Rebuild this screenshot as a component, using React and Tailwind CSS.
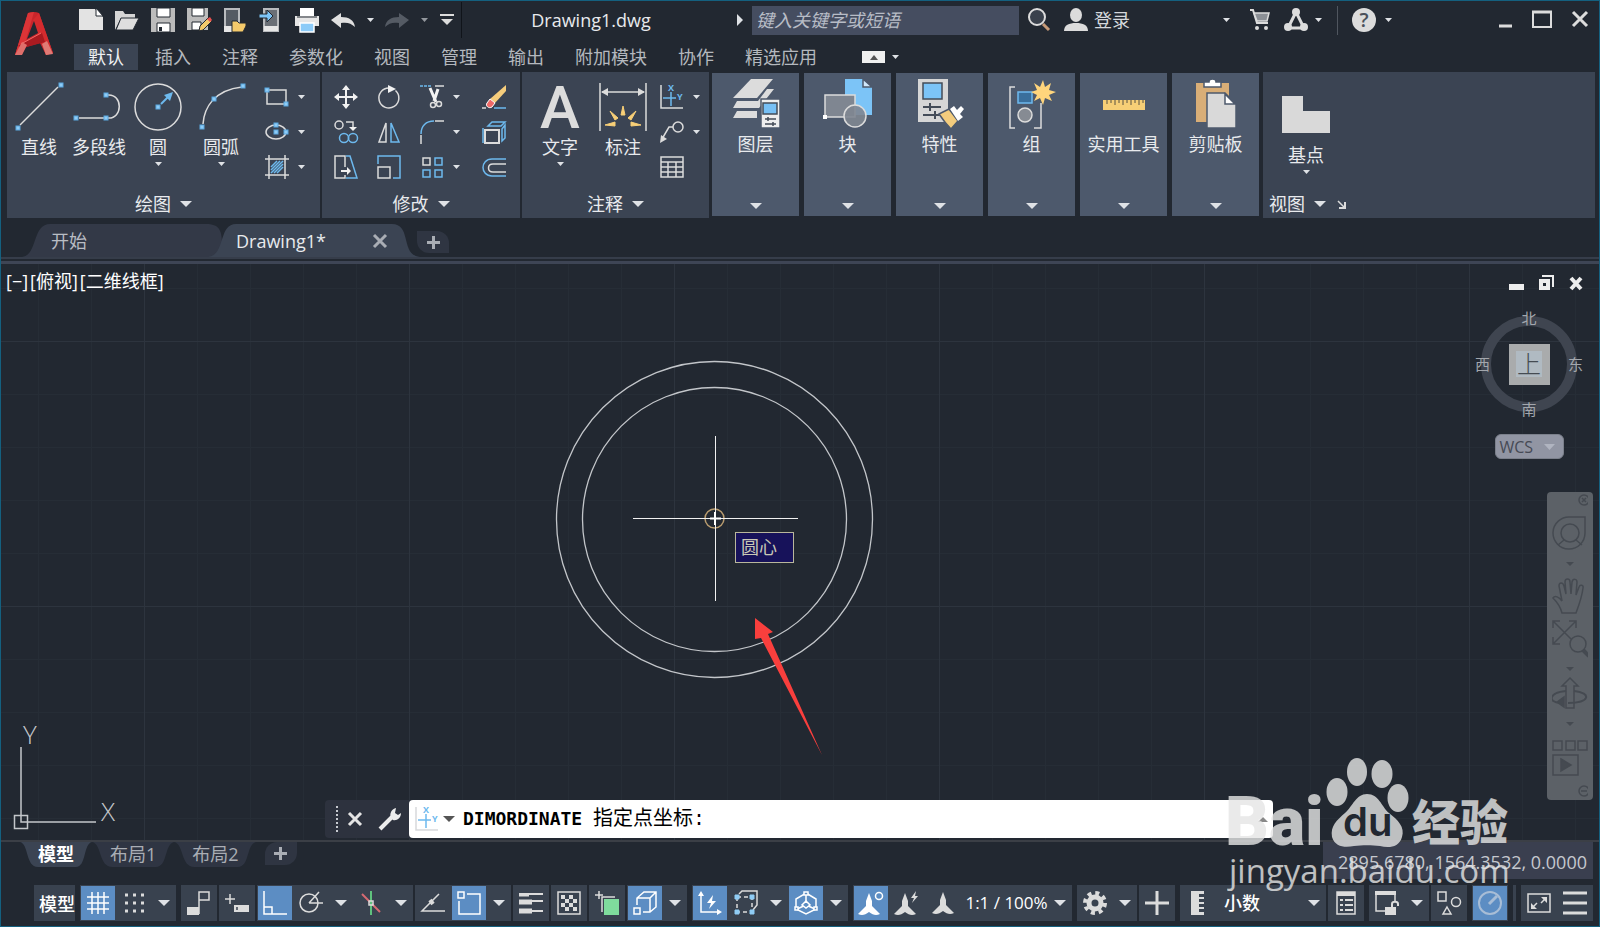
import React from 'react';
import clsx from 'clsx';

const BLUE = '#6db9ee';
const LIGHT = '#dcdcdc';

/* ---------- small shared pieces ---------- */

function Svg({ w = 24, h = 24, className, children }) {
  return (
    <svg width={w} height={h} viewBox={`0 0 ${w} ${h}`} fill="none" stroke={LIGHT} strokeWidth="1.5" aria-hidden="true" className={clsx('shrink-0 overflow-visible', className)}>
      {children}
    </svg>
  );
}

function Caret({ small, className }) {
  return small ? (
    <svg width="7" height="4" viewBox="0 0 7 4" fill="#dfe2e6" aria-hidden="true" className={clsx('shrink-0', className)}>
      <path d="M0 0h7L3.5 4z" />
    </svg>
  ) : (
    <svg width="12" height="6" viewBox="0 0 12 6" fill="#dfe2e6" aria-hidden="true" className={clsx('shrink-0', className)}>
      <path d="M0 0h12L6 6z" />
    </svg>
  );
}

function Node({ x, y }) {
  return <rect x={x - 2} y={y - 2} width="4" height="4" fill="#8fccf5" stroke="#5aa7e0" strokeWidth="1" />;
}

/* ---------- title bar ---------- */

function Logo() {
  return (
    <svg width="40" height="44" viewBox="0 0 40 44" aria-hidden="true">
      <path d="M14 1q6-2 11 0l14 40-7 2-6-12-14 4-4 7-7 1z" fill="#c9252b" />
      <path d="M14 1l6-1L8 42l-7 1z" fill="#dc3437" />
      <path d="M25 1l14 40-7 2L19 8z" fill="#d42b2e" />
      <path d="M20 9l4 12-11 6z" fill="#222831" />
      <path d="M4 34l24-13 3 9-22 6z" fill="#a81a20" />
      <path d="M1 43l7-13 5 3-5 10z" fill="#df6f6b" />
      <path d="M32 43l-4-11 5-3 6 13z" fill="#e07a75" />
      <path d="M7 32l20-11" stroke="#f06a66" strokeWidth="1" />
    </svg>
  );
}

const quickAccess = [
  { name: '新建', icon: <Svg><path d="M0 1h16l8 8v13H0z" fill="#e3e3e3" stroke="none" /><path d="M17 0v8h7z" fill="#fff" stroke="#222831" strokeWidth="1" /></Svg> },
  { name: '打开', icon: <Svg><path d="M0 22V3h8l2 3h10v4H6z" fill="#d5d5d5" stroke="none" /><path d="M6 10h18l-6 12H1z" fill="#dedede" stroke="#222831" strokeWidth="1" /></Svg> },
  { name: '保存', icon: <Svg><path d="M0 0h24v24H0z" fill="#bcbcbc" stroke="none" /><path d="M6 0h13v9H6zM6 15h13v9H6z" fill="#fff" stroke="#222831" strokeWidth="1" /><path d="M8 19h3v4H8z" fill="#222831" stroke="none" /></Svg> },
  { name: '另存为', icon: <Svg><path d="M0 0h21v22H0z" fill="#bcbcbc" stroke="none" /><path d="M5 0h12v8H5zM5 14h9v8H5z" fill="#fff" stroke="#222831" strokeWidth="1" /><path d="M12 23l1-5 8-8 4 3-9 9z" fill="#f5ca6b" stroke="#222831" strokeWidth="1" /><path d="M20 11l3-2 2 3-2 2z" fill="#e8504f" stroke="none" /></Svg> },
  { name: '从 Web 和 Mobile 打开', icon: <Svg><path d="M2 1h14v22H2z" fill="#555b63" stroke="#b9bbbe" strokeWidth="2" /><path d="M1 18h9v6H1z" fill="#e6e6e6" stroke="none" /><path d="M9 13h5l2 2h7v3l-3 6H9z" fill="#f5ca6b" stroke="#222831" strokeWidth="1" /></Svg> },
  { name: '保存到 Web 和 Mobile', icon: <Svg><path d="M5 1h14v22H5z" fill="#6a6f76" stroke="#b9bbbe" strokeWidth="2" /><path d="M5 18h14v5H5z" fill="#e6e6e6" stroke="none" /><path d="M0 6h8V2l6 6-6 6v-4H0z" fill="#7cc4f7" stroke="#222831" strokeWidth="1" /></Svg> },
  { name: '打印', icon: <Svg><path d="M5 0h14v8H5z" fill="#fff" stroke="none" /><path d="M0 8h24v10H0z" fill="#e6e6e6" stroke="none" /><path d="M2 9h20" stroke="#222831" strokeWidth="1" /><path d="M5 15h14v9H5z" fill="#8ccbf8" stroke="#fff" /></Svg> },
  { name: '放弃', icon: <Svg><path d="M0 12l10-7v4c8 0 13 3 14 10-4-4-8-5-14-4v5z" fill="#e0e0e0" stroke="none" /></Svg> },
];

function TitleBar() {
  return (
    <div className="flex h-[38px] items-center">
      <div className="flex items-center pl-[7px]">
        {quickAccess.map((q) => (
          <button key={q.name} aria-label={q.name} className="flex w-9 justify-center">{q.icon}</button>
        ))}
        <button aria-label="放弃列表" className="flex w-[18px] justify-center"><Caret small /></button>
        <button aria-label="重做" className="flex w-9 justify-center">
          <Svg><path d="M24 12l-10-7v4C6 9 1 12 0 19c4-4 8-5 14-4v5z" fill="#555b64" stroke="none" /></Svg>
        </button>
        <button aria-label="重做列表" className="flex w-[18px] justify-center"><Caret small className="opacity-60" /></button>
        <button aria-label="自定义快速访问工具栏" className="flex w-7 justify-center">
          <Svg w={14} h={12}><path d="M0 1h14" strokeWidth="2" /><path d="M1 5h12l-6 6z" fill={LIGHT} stroke="none" /></Svg>
        </button>
      </div>
      <h1 className="flex-1 border-l border-[#10141a] pr-2 text-center text-lg leading-9">Drawing1.dwg</h1>
      <div className="flex items-center">
        <button aria-label="展开搜索" className="flex w-6 justify-center">
          <svg width="6" height="12" viewBox="0 0 6 12" fill="#dfe2e6" aria-hidden="true"><path d="M0 0l6 6-6 6z" /></svg>
        </button>
        <input
          type="text"
          aria-label="搜索"
          placeholder="键入关键字或短语"
          className="h-[29px] w-[267px] bg-[#454d60] px-1 text-lg leading-7 italic outline-none placeholder:text-[#b7bcc6]"
        />
        <button aria-label="查找" className="flex w-10 justify-center">
          <Svg><circle cx="10" cy="9" r="8" strokeWidth="2" fill="#3a414c" /><path d="M16 16l6 6" stroke="#c79a78" strokeWidth="3" /></Svg>
        </button>
        <button className="flex items-center gap-[6px] text-lg leading-9 text-[#d5d8dc]">
          <Svg className="ml-[5px]"><ellipse cx="12" cy="7" rx="6" ry="7" fill={LIGHT} stroke="none" /><path d="M0 23c0-6 5-8 12-8s12 2 12 8z" fill={LIGHT} stroke="none" /></Svg>
          登录
          <Caret small className="ml-[87px]" />
        </button>
        <button aria-label="Autodesk App Store" className="ml-5 flex">
          <Svg w={20}><path d="M0 2h3l4 13h11" strokeWidth="2" /><path d="M4 5h15l-2 8H7z" fill="#8b8f95" stroke={LIGHT} /><circle cx="7" cy="20" r="2" fill={LIGHT} stroke="none" /><circle cx="16" cy="20" r="2" fill={LIGHT} stroke="none" /></Svg>
        </button>
        <button aria-label="保持连接" className="ml-[14px] flex items-center gap-[7px]">
          <Svg><path d="M12 4L4 20h16z" strokeWidth="3" /><circle cx="12" cy="4" r="4" fill={LIGHT} stroke="none" /><circle cx="4" cy="19" r="4" fill={LIGHT} stroke="none" /><circle cx="20" cy="19" r="4" fill={LIGHT} stroke="none" /></Svg>
          <Caret small />
        </button>
        <span className="mr-[14px] ml-[15px] h-[29px] w-px bg-[#50565f]" />
        <button aria-label="帮助" className="flex items-center gap-[9px]">
          <span className="grid size-6 place-items-center rounded-full bg-[#dcdcdc] text-xl leading-6 font-semibold text-[#4b515b]">?</span>
          <Caret small />
        </button>
        <div className="ml-[107px] flex items-center gap-5 pr-[11px]">
          <button aria-label="最小化"><Svg w={13} h={20}><path d="M0 16h13" strokeWidth="3" /></Svg></button>
          <button aria-label="最大化"><Svg w={20} h={20}><path d="M1 2h18v15H1z" strokeWidth="2" /><path d="M0 2h20" strokeWidth="3" /></Svg></button>
          <button aria-label="关闭"><Svg w={16} h={20}><path d="M1 2l14 14M15 2L1 16" strokeWidth="3" /></Svg></button>
        </div>
      </div>
    </div>
  );
}

const menuTabs = ['默认', '插入', '注释', '参数化', '视图', '管理', '输出', '附加模块', '协作', '精选应用'];

function MenuTabs() {
  return (
    <nav className="mt-[5px] flex h-[26px] items-center gap-[3px] pl-[8px]">
      {menuTabs.map((t, i) => (
        <button key={t} className={clsx('h-[26px] px-[14px] text-lg leading-[24px]', i === 0 ? 'bg-[#3b4453] text-[#eef0f2]' : 'text-[#b4b8be]')}>
          {t}
        </button>
      ))}
      <button aria-label="最小化功能区" className="ml-[28px] flex items-center gap-[7px]">
        <span className="grid h-3 w-[23px] place-items-center bg-[#f0f0f0]">
          <svg width="8" height="5" viewBox="0 0 8 5" fill="#555" aria-hidden="true"><path d="M4 0l4 5H0z" /></svg>
        </span>
        <Caret small />
      </button>
    </nav>
  );
}

/* ---------- ribbon ---------- */

function BigButton({ label, icon, caret, className }) {
  return (
    <button className={clsx('flex flex-col items-center', className)}>
      {icon}
      <span className="text-lg leading-[30px] whitespace-nowrap">{label}</span>
      {caret && <Caret small />}
    </button>
  );
}

function SmallButton({ label, icon, caret, className }) {
  return (
    <button aria-label={label} className={clsx('flex h-[35px] items-center', className)}>
      {icon}
      {caret && <Caret small className="ml-[9px]" />}
    </button>
  );
}

function Panel({ title, className, children }) {
  return (
    <section className={clsx('flex h-[146px] flex-col justify-between bg-[#3b4453]', className)}>
      <div className="flex">{children}</div>
      <button className="flex h-7 items-center justify-center gap-[9px] text-lg leading-7">
        {title}
        <Caret />
      </button>
    </section>
  );
}

const lineIcon = (
  <Svg w={50} h={50}><path d="M6 43L44 5" /><Node x={4} y={46} /><Node x={47} y={3} /></Svg>
);
const polylineIcon = (
  <Svg w={50} h={50}><path d="M5 36h25M34 36c15 1 15-24 0-23" /><Node x={2} y={36} /><Node x={32} y={36} /><Node x={32} y={13} /></Svg>
);
const circleIcon = (
  <Svg w={50} h={50}><circle cx="25" cy="25" r="23" /><path d="M28 22l8-8" stroke={BLUE} strokeWidth="2" /><path d="M40 10l-3 9-6-6z" fill={BLUE} stroke="none" /><Node x={25} y={25} /></Svg>
);
const arcIcon = (
  <Svg w={50} h={50}><path d="M7 42C8 26 18 8 46 5" /><Node x={6} y={45} /><Node x={18} y={17} /><Node x={47} y={4} /></Svg>
);

const drawSmall = [
  { name: '矩形', icon: <Svg><path d="M2 5h19v14H2z" /><Node x={2} y={5} /><Node x={21} y={19} /></Svg> },
  { name: '椭圆', icon: <Svg><ellipse cx="11" cy="12" rx="10" ry="7" /><Node x={11} y={5} /><Node x={11} y={12} /><Node x={21} y={12} /></Svg> },
  { name: '图案填充', icon: <Svg><path d="M6 18L18 6M6 12l6-6M12 18l6-6M6 15l9-9M9 18l9-9" stroke={BLUE} /><path d="M4 0v24M20 0v24M0 4h24M0 20h24" /></Svg> },
];

const modifyRows = [
  [
    { name: '移动', icon: <Svg><path d="M12 3v18M3 12h18" strokeWidth="2" stroke="#f2f2f2" /><path d="M12 0l4 5H8zM12 24l4-5H8zM0 12l5-4v8zM24 12l-5-4v8z" fill="#f2f2f2" stroke="none" /></Svg> },
    { name: '旋转', icon: <Svg><path d="M18.500 5.500A10 10 0 1 1 12 3" /><path d="M11 0l8 4-8 4z" fill="#f2f2f2" stroke="none" /></Svg> },
    { name: '修剪', icon: <Svg><path d="M0 1h11" stroke={BLUE} strokeDasharray="3 1" /><path d="M15 1h9" /><path d="M10 3l6 14M18 4l-4 12" strokeWidth="3" stroke="#f2f2f2" /><circle cx="13" cy="20" r="2.500" /><circle cx="19" cy="19" r="2.500" /></Svg> },
    { name: '删除', icon: <Svg><path d="M24 0v6L13 18l-5-4z" fill="#f6cd7c" stroke="none" /><path d="M8 14l5 4-3 4c-3 2-7-1-5-4z" fill="#ef6a68" stroke="#fff" strokeWidth="1" /><path d="M0 23h4" /><path d="M12 23h12" stroke={BLUE} /></Svg> },
  ],
  [
    { name: '复制', icon: <Svg><circle cx="5" cy="5" r="4" /><path d="M12 2h7v5" /><path d="M19 11l-4-4h8z" fill="#f2f2f2" stroke="none" /><circle cx="10" cy="18" r="4.500" stroke={BLUE} /><circle cx="19" cy="18" r="4.500" stroke={BLUE} /></Svg> },
    { name: '镜像', icon: <Svg><path d="M9 3v19H2z" /><path d="M14 3v19h8z" stroke={BLUE} /></Svg> },
    { name: '圆角', icon: <Svg><path d="M1 14C1 6 6 1 14 1" stroke={BLUE} /><path d="M15 1h9M1 15v9" /></Svg> },
    { name: '分解', icon: <Svg><path d="M3 10h14v13H3z" strokeWidth="2" /><path d="M6 6l4-4h13l-4 4zM20 9l3-4v13l-3 3zM1 8v15" stroke={BLUE} /></Svg> },
  ],
  [
    { name: '拉伸', icon: <Svg><path d="M11 12V1H1v22h10v-3" /><path d="M12 1h4l7 22H12" stroke={BLUE} /><path d="M7 16h7" strokeWidth="2" stroke="#f2f2f2" /><path d="M13 12l4 4-4 4z" fill="#f2f2f2" stroke="none" /></Svg> },
    { name: '缩放', icon: <Svg><path d="M1 9V1h22v22h-7" stroke={BLUE} /><path d="M1 12h12v11H1z" /></Svg> },
    { name: '阵列', icon: <Svg><path d="M3 3h7v7H3z" /><path d="M15 3h7v7h-7zM3 15h7v7H3zM15 15h7v7h-7z" stroke={BLUE} /></Svg> },
    { name: '偏移', icon: <Svg><path d="M24 4H10C-2 4-2 21 10 21h14" stroke={BLUE} /><path d="M24 9H11c-6 0-6 8 0 8h13" /></Svg> },
  ],
];

const cellWidths = ['w-[44px] pl-[10px]', 'w-[42px] pl-[9px]', 'w-[66px] pl-[10px]', 'w-[37px] pl-[6px]'];

function OrdinateGlyph({ stroke = LIGHT }) {
  return (
    <Svg>
      <path d="M1 0v23h22" stroke={stroke} />
      <path d="M11 7v14M3 13h13" stroke={BLUE} />
      <text x="8" y="6" fontSize="9" fontWeight="700" fill={BLUE} stroke="none">X</text>
      <text x="17" y="15" fontSize="9" fontWeight="700" fill={BLUE} stroke="none">Y</text>
    </Svg>
  );
}

const noteSmall = [
  { name: '坐标', icon: <OrdinateGlyph />, caret: true },
  { name: '引线', icon: <Svg><circle cx="18" cy="7" r="5" /><path d="M13 7H9L2 19" /><path d="M0 23l1-8 6 4z" fill={LIGHT} stroke="none" /></Svg>, caret: true },
  { name: '表格', icon: <Svg><path d="M1 2h22v20H1zM1 7h22M1 12h22M1 17h22M8 7v15M16 7v15" /></Svg> },
];

const collapsed = [
  {
    name: '图层',
    icon: (
      <Svg w={50} h={50}>
        <path d="M20 0h22L26 19H2z" fill={LIGHT} stroke="none" />
        <path d="M6 22h21l9-12h7L28 29H2zM6 32h20v7H2z" fill={LIGHT} stroke="none" />
        <path d="M30 20h19v29H30z" fill="#eee" stroke="#4d596c" />
        <path d="M32 24h14v11H32z" fill="#77c0f5" stroke="#444c58" />
        <path d="M34 40h11M34 45h11M37 38v4M42 43v4" stroke="#444c58" />
      </Svg>
    ),
  },
  {
    name: '块',
    icon: (
      <Svg w={50} h={50}>
        <path d="M22 0h18l9 8v28H22z" fill="#7cc4f7" stroke="none" />
        <path d="M40 0v8h9z" fill="#cfe8fb" stroke="#4d596c" />
        <path d="M2 16h30v22H2z" fill="#7f8691" />
        <circle cx="32" cy="37" r="11" fill="#7f8691" fillOpacity=".9" />
        <path d="M0 36h4v4H0z" fill="#fff" stroke="none" />
      </Svg>
    ),
  },
  {
    name: '特性',
    icon: (
      <Svg w={50} h={50}>
        <path d="M3 0h30v43H3z" fill="#d6d6d6" stroke="none" />
        <path d="M8 4h19v16H8z" fill="#7cc4f7" stroke="#444c58" />
        <path d="M8 28h18M8 36h18M15 24v8M20 32v8" stroke="#444c58" strokeWidth="2" />
        <path d="M24 35l10-5 9 12-7 8c-4-4-8-9-12-15z" fill="#f3cc7d" stroke="#4d596c" />
        <path d="M35 30l4-3 3 4 4-4 3 3-4 5 3 3-5 4z" fill="#fff" stroke="none" />
      </Svg>
    ),
  },
  {
    name: '组',
    icon: (
      <Svg w={50} h={50}>
        <path d="M8 8H3v41h5M27 49h7V24" />
        <path d="M11 13h14v11H11z" fill="#3a6f9c" stroke={BLUE} />
        <circle cx="18" cy="36" r="7" fill="#868b93" />
        <path d="M36 1l2 7 6-4-2 7 7 2-7 3 3 6-7-3-2 7-3-7-6 3 3-6-6-3 6-2-3-7 6 4z" fill="#ffd57c" stroke="none" />
      </Svg>
    ),
  },
  {
    name: '实用工具',
    icon: (
      <Svg w={50} h={50}>
        <path d="M4 21h42v10H4z" fill="#f7cf76" stroke="none" />
        <path d="M8 21v4M12 21v3M16 21v5M20 21v3M24 21v5M28 21v3M32 21v5M36 21v3M40 21v5M44 21v3" stroke="#5a5340" strokeWidth="1" />
      </Svg>
    ),
  },
  {
    name: '剪贴板',
    icon: (
      <Svg w={50} h={50}>
        <path d="M5 4h33v39H5z" fill="#d9ae77" stroke="none" />
        <path d="M13 8V3h5c0-4 7-4 7 0h5v5z" fill="#fff" stroke="#4d596c" />
        <path d="M16 14h18l11 11v24H16z" fill="#d9d9d9" stroke="#4d596c" />
        <path d="M34 15v10h10z" fill="#fff" stroke="#4d596c" />
      </Svg>
    ),
  },
];

function Ribbon() {
  return (
    <div className="flex pt-[2px] pr-[4px] pl-[6px]">
      <Panel title="绘图" className="w-[313px]">
        <div className="flex pt-[10px] pl-[6px]">
          <BigButton label="直线" icon={lineIcon} className="w-[52px]" />
          <BigButton label="多段线" icon={polylineIcon} className="w-[68px]" />
          <BigButton label="圆" icon={circleIcon} className="w-[50px]" caret />
          <BigButton label="圆弧" icon={arcIcon} className="w-[76px]" caret />
        </div>
        <div className="flex flex-col pt-[7px] pl-[6px]">
          {drawSmall.map((b) => <SmallButton key={b.name} label={b.name} icon={b.icon} caret />)}
        </div>
      </Panel>
      <Panel title="修改" className="ml-[2px] w-[198px]">
        <div className="flex flex-col pt-[7px] pl-[2px]">
          {modifyRows.map((row) => (
            <div key={row[0].name} className="flex">
              {row.map((b, i) => (
                <SmallButton key={b.name} label={b.name} icon={b.icon} caret={i === 2} className={cellWidths[i]} />
              ))}
            </div>
          ))}
        </div>
      </Panel>
      <Panel title="注释" className="ml-[2px] w-[187px]">
        <div className="flex pt-[10px] pl-[6px]">
          <BigButton
            label="文字"
            caret
            className="w-[64px]"
            icon={<Svg w={50} h={50}><text x="25" y="46" textAnchor="middle" fontSize="60" fontWeight="500" fontFamily="Roboto" fill={LIGHT} stroke="none">A</text></Svg>}
          />
          <BigButton
            label="标注"
            className="w-[62px]"
            icon={
              <Svg w={50} h={50}>
                <path d="M2 1v48M48 1v48M4 10h42" />
                <path d="M3 10l7-4v8zM47 10l-7-4v8z" fill={LIGHT} stroke="none" />
                <path d="M25 24l2 9h-4zM12 29l8 7-3 2zM38 29l-8 7 3 2zM7 43l10-3v4zM43 43l-10-3v4z" fill="#f8cf77" stroke="#f8cf77" strokeWidth="1" />
              </Svg>
            }
          />
        </div>
        <div className="flex flex-col pt-[7px] pl-[6px]">
          {noteSmall.map((b) => <SmallButton key={b.name} label={b.name} icon={b.icon} caret={b.caret} />)}
        </div>
      </Panel>
      <div className="mr-[4px] ml-[3px] flex gap-[5px] pt-px pb-[2px]">
        {collapsed.map((p) => (
          <button key={p.name} className="flex w-[87px] flex-col items-center bg-[#4d596c] pt-[6px] pb-[7px]">
            {p.icon}
            <span className="text-lg leading-[30px] whitespace-nowrap">{p.name}</span>
            <Caret className="mt-auto" />
          </button>
        ))}
      </div>
      <section className="flex h-[146px] flex-1 flex-col items-start justify-between bg-[#3b4453]">
        <BigButton
          label="基点"
          caret
          className="ml-[18px] pt-[18px]"
          icon={<Svg w={50} h={50}><path d="M1 6h21v15h27v22H1z" fill="#d9d9d9" stroke="none" /></Svg>}
        />
        <div className="flex h-7 items-center pl-[6px]">
          <button className="flex items-center gap-[9px] text-lg leading-7">视图<Caret /></button>
          <button aria-label="视图设置" className="ml-[11px]">
            <Svg w={9} h={9}><path d="M1 1l6 6" /><path d="M8 2v6H2" strokeWidth="2" /></Svg>
          </button>
        </div>
      </section>
    </div>
  );
}

/* ---------- file tabs ---------- */

function FileTabs() {
  return (
    <div className="border-b-[3px] border-[#3e4555] pb-[2px]">
      <div className="flex h-[41px] items-end border-b-2 border-[#363d4a] pl-[21px]">
        <button className="relative h-[33px] w-[200px] pl-[29px] text-left text-lg leading-8 text-[#b9bdc4]">
          <svg className="absolute inset-0 h-full w-full" viewBox="0 0 200 33" preserveAspectRatio="none" aria-hidden="true">
            <path d="M0 33C16 31 10 0 28 0h156c18 0 16 12 16 33z" fill="#333947" />
          </svg>
          <span className="relative">开始</span>
        </button>
        <div className="relative -ml-[14px] flex h-[33px] w-[212px] items-center pl-[28px]">
          <svg className="absolute inset-0 h-full w-full" viewBox="0 0 212 33" preserveAspectRatio="none" aria-hidden="true">
            <path d="M0 33C18 31 10 0 28 0h156c20 0 8 31 28 33z" fill="#3b4453" />
          </svg>
          <button className="relative text-lg leading-8">Drawing1*</button>
          <button aria-label="关闭 Drawing1" className="relative mr-[33px] ml-auto">
            <Svg w={14} h={14}><path d="M1 1l12 12M13 1L1 13" stroke="#a9adb4" strokeWidth="3" /></Svg>
          </button>
        </div>
        <button aria-label="新图形" className="mb-1 -ml-[3px] grid h-[22px] w-[32px] place-items-center rounded-tr-xl rounded-bl-xl bg-[#2f3542]">
          <Svg w={13} h={13}><path d="M6.500 0v13M0 6.500h13" stroke="#a9adb4" strokeWidth="3" /></Svg>
        </button>
      </div>
    </div>
  );
}

/* ---------- drawing area ---------- */

function Drawing() {
  return (
    <svg className="absolute inset-0 h-full w-full" aria-hidden="true">
      <defs>
        <pattern id="minor" width="53" height="53" x="37" y="24" patternUnits="userSpaceOnUse">
          <path d="M.5 0v53M0 .5h53" stroke="#262d36" />
        </pattern>
        <pattern id="major" width="265" height="265" x="143" y="77" patternUnits="userSpaceOnUse">
          <path d="M.5 0v265M0 .5h265" stroke="#2d343e" />
        </pattern>
      </defs>
      <rect width="100%" height="100%" fill="url(#minor)" />
      <rect width="100%" height="100%" fill="url(#major)" />
      <g fill="none" stroke="#c3c6ca" strokeWidth="1.300">
        <circle cx="713.500" cy="255.500" r="158" />
        <circle cx="713.500" cy="255.500" r="132" />
      </g>
      <circle cx="713.500" cy="254.500" r="9.500" fill="none" stroke="#b99c6f" strokeWidth="1.500" />
      <path d="M714.500 172v165M632 254.500h165" stroke="#f1f1f1" />
      <path d="M714 248v13M709 254.500h11" stroke="#fff" strokeWidth="2" />
      <path d="M754 354l18 14-5 2 54 121-61-117-6 1z" fill="#f93f3d" />
    </svg>
  );
}

function Ucs() {
  return (
    <svg className="absolute bottom-0 left-[12px]" width="110" height="130" viewBox="0 -14 110 130" fill="none" stroke="#c3c6ca" strokeWidth="1.500" aria-hidden="true">
      <path d="M8 23v75h75" />
      <path d="M1.500 91.500h13v13h-13z" />
      <text x="10" y="20" fontSize="26" fontFamily="Open Sans" fontWeight="300" fill="#c3c6ca" stroke="none">Y</text>
      <text x="88" y="97" fontSize="26" fontFamily="Open Sans" fontWeight="300" fill="#c3c6ca" stroke="none">X</text>
    </svg>
  );
}

function ViewCube() {
  return (
    <div className="absolute top-[40px] right-[16px] flex w-[108px] flex-col items-center">
      <div className="relative grid size-[108px] place-items-center text-[15px] leading-5 text-[#a3a7ad]">
        <span className="absolute inset-x-[6px] top-[12px] size-[96px] rounded-full border-[10px] border-[#3f4550]" />
        <button className="absolute top-[4px]">北</button>
        <button className="absolute bottom-[-7px]">南</button>
        <button className="absolute top-[50px] left-0">西</button>
        <button className="absolute top-[50px] right-0">东</button>
        <button className="relative mt-[12px] grid size-[41px] place-items-center bg-[#a9abac]">
          <span className="grid size-[26px] place-items-center bg-[#b0bac2] text-2xl leading-6 font-light text-[#454b52]">上</span>
        </button>
      </div>
      <button className="mt-[22px] flex h-[25px] w-[69px] items-center justify-between rounded-md border border-[#7b808b] bg-[#9195a3] px-1 text-base leading-6 text-[#464a55]">
        WCS
        <svg width="11" height="6" viewBox="0 0 11 6" fill="#b0b4c0" className="mr-1" aria-hidden="true"><path d="M0 0h11L5.500 6z" /></svg>
      </button>
    </div>
  );
}

function NavIcon({ name, h, children }) {
  return (
    <button aria-label={name}>
      <svg width="36" height={h} viewBox={`0 0 36 ${h}`} fill="none" stroke="#454a51" strokeWidth="1.500" aria-hidden="true">{children}</svg>
    </button>
  );
}

const navCaret = <path d="M14 2h8l-4 4z" fill="#454a51" stroke="none" />;

function NavBar() {
  return (
    <div className="absolute top-[228px] right-[6px] flex w-[46px] flex-col items-center rounded-sm bg-[#5c6167]">
      <NavIcon name="关闭导航栏" h={20}><circle cx="32" cy="8" r="5" /><path d="M30 6l4 4M34 6l-4 4" /></NavIcon>
      <NavIcon name="控制盘" h={60}>
        <path d="M18 5h15v16a16 16 0 1 1-15-16z" /><circle cx="18" cy="21" r="9" /><path d="M12 28l-6 5M24 28l6 5" />
        <g transform="translate(0 48)">{navCaret}</g>
      </NavIcon>
      <NavIcon name="平移" h={48}>
        <path d="M10 41C8 33 4 29 1 26c2-3 6-1 9 3L7 14c0-4 4-4 5 0l2 8-1-12c0-4 5-4 5 0l1 12 1-12c1-4 5-3 5 0l-1 13 3-8c1-3 5-2 4 1-1 9-4 17-7 25z" />
      </NavIcon>
      <NavIcon name="缩放" h={55}>
        <path d="M2 2l21 21M23 2L2 23M1 8V1h7M17 1h7v7M1 17v7h7" /><circle cx="26" cy="24" r="8" fill="#5c6167" /><path d="M31 30l6 6" strokeWidth="4" />
        <g transform="translate(0 45)">{navCaret}</g>
      </NavIcon>
      <NavIcon name="动态观察" h={60}>
        <path d="M14 33V11h-4l8-8 8 8h-4v22z" /><path d="M14 16C-4 18-4 27 8 28M22 16c18 2 16 12-6 12" strokeWidth="2" /><path d="M5 27l7-5v10z" fill="#454a51" />
        <g transform="translate(0 45)">{navCaret}</g>
      </NavIcon>
      <NavIcon name="ShowMotion" h={50}>
        <path d="M1 6h9v9H1zM14 6h9v9h-9zM26 6h9v9h-9zM1 20h25v20H1z" /><path d="M9 24l10 6-10 6z" fill="#454a51" />
      </NavIcon>
      <NavIcon name="自定义导航栏" h={15}><circle cx="32" cy="6" r="5" /><path d="M29 6h6" /></NavIcon>
    </div>
  );
}

function CommandLine() {
  return (
    <div className="absolute bottom-[2px] left-[324px] flex h-[38px] w-[948px] items-stretch rounded-sm bg-[#2d323e]">
      <div className="flex w-[84px] items-center pl-[11px]">
        <span className="h-[26px] border-l-2 border-dotted border-[#c7cad0]" />
        <button aria-label="关闭命令行" className="ml-[10px]">
          <Svg w={14} h={14}><path d="M1 1l12 12M13 1L1 13" stroke="#e4e4e4" strokeWidth="3" /></Svg>
        </button>
        <button aria-label="自定义" className="ml-[16px]">
          <Svg><path d="M2 22L14 10" stroke="#ececec" strokeWidth="4" /><path d="M13 11c-2-5 1-9 5-10l-1 5 3 2 3-2c0 5-4 8-8 7z" fill="#ececec" stroke="none" /></Svg>
        </button>
      </div>
      <div className="flex flex-1 items-center rounded-sm bg-white pl-[6px] text-black">
        <button aria-label="最近使用的命令" className="flex items-center gap-1">
          <OrdinateGlyph stroke="#d7d9dc" />
          <svg width="12" height="6" viewBox="0 0 12 6" fill="#555" aria-hidden="true"><path d="M0 0h12L6 6z" /></svg>
        </button>
        <label htmlFor="command" className="ml-[8px] font-['DejaVu_Sans_Mono','Noto_Sans_CJK_SC',monospace] text-lg leading-9 whitespace-nowrap">
          <b>DIMORDINATE</b> <span className="font-['Liberation_Mono','Noto_Sans_CJK_SC',monospace] text-xl">指定点坐标:</span>
        </label>
        <input id="command" type="text" className="h-9 min-w-0 flex-1 bg-transparent pl-2 text-lg outline-none" />
        <button aria-label="命令历史" className="pr-[5px]">
          <svg width="10" height="5" viewBox="0 0 10 5" fill="#888" aria-hidden="true"><path d="M5 0l5 5H0z" /></svg>
        </button>
      </div>
    </div>
  );
}

function Canvas() {
  return (
    <main className="relative flex-1">
      <Drawing />
      <div className="relative flex items-start justify-between pt-[3px] pr-[15px] pl-[5px]">
        <div className="flex gap-[2px] text-lg leading-7 text-white">
          <button>[−]</button>
          <button>[俯视]</button>
          <button>[二维线框]</button>
        </div>
        <div className="flex items-center gap-[15px] pt-[8px]">
          <button aria-label="最小化视口"><Svg w={15} h={16}><path d="M0 9h15v6H0z" fill="#ededed" stroke="none" /></Svg></button>
          <button aria-label="还原视口"><Svg w={15} h={16}><path d="M2 6h7v7H2z" stroke="#ededed" strokeWidth="4" /><path d="M3 1h11v11" stroke="#ededed" strokeWidth="2" /></Svg></button>
          <button aria-label="关闭视口"><Svg w={15} h={16}><path d="M2 3l10 11M12 3L2 14" stroke="#ededed" strokeWidth="4" /></Svg></button>
        </div>
      </div>
      <span className="absolute top-[268px] left-[734px] h-[31px] w-[59px] border border-[#b9b79c] bg-[#17125a] pl-[5px] text-lg leading-[28px] text-[#c9c8b6]">
        圆心
      </span>
      <Ucs />
      <ViewCube />
      <NavBar />
      <CommandLine />
    </main>
  );
}

/* ---------- layout tabs and status bar ---------- */

const layoutTabs = [
  { name: '模型', active: true },
  { name: '布局1' },
  { name: '布局2' },
];

function LayoutTabs() {
  return (
    <div className="flex h-[45px] items-start border-t-2 border-[#3b3f46] pr-[6px] pl-[19px]">
      {layoutTabs.map((t) => (
        <button key={t.name} className={clsx('relative h-[25px] px-[18px] text-lg leading-[23px]', t.active ? 'font-bold text-white' : 'text-[#a9adb4]')}>
          <svg className="absolute inset-0 h-full w-full" viewBox="0 0 80 25" preserveAspectRatio="none" aria-hidden="true">
            <path d="M0 0c10 2 6 25 20 25h42C74 25 70 2 80 0z" fill={t.active ? '#3b4453' : '#2f3543'} />
          </svg>
          <span className="relative">{t.name}</span>
        </button>
      ))}
      <button aria-label="新建布局" className="ml-[8px] grid h-[23px] w-[32px] place-items-center rounded-tl-xl rounded-br-xl bg-[#2f3542]">
        <Svg w={13} h={13}><path d="M6.500 0v13M0 6.500h13" stroke="#a9adb4" strokeWidth="3" /></Svg>
      </button>
      <output className="ml-auto h-[37px] w-[270px] bg-[#3a3f4f] pr-[6px] text-right text-lg leading-[40px] text-[#c5c8ce]">2895.6780, 1564.3532, 0.0000</output>
    </div>
  );
}

function Group({ children }) {
  return <div className="flex h-9 shrink-0 items-stretch bg-[#39424f]">{children}</div>;
}

function Cell({ label, on, children }) {
  return (
    <button aria-label={label} aria-pressed={!!on} className={clsx('grid w-9 place-items-center border border-[#39424f]', on && 'bg-[#5c8dc3]')}>
      <Svg>{children}</Svg>
    </button>
  );
}

function Drop({ label }) {
  return <button aria-label={label} className="grid w-6 place-items-center"><Caret /></button>;
}

const scalePerson = 'M12 0l3 8v5l8 8c-4 2-7 1-11-2-4 3-7 4-11 2l8-8V8z';

function StatusBar() {
  return (
    <footer className="flex h-[41px] items-start justify-end gap-[5px] pr-[6px] text-white">
      <Group><button className="w-[41px] pt-px text-right text-lg font-medium whitespace-nowrap">模型</button></Group>
      <Group>
        <Cell label="显示图形栅格" on><path d="M6 1v22M12 1v22M18 1v22M1 6h22M1 12h22M1 18h22" stroke="#fff" /></Cell>
        <Cell label="捕捉模式"><path d="M3 4h20M3 12h20M3 20h20" strokeWidth="3" strokeDasharray="3 5" /></Cell>
        <Drop label="捕捉设置" />
      </Group>
      <div className="flex gap-[2px]">
        <Group><Cell label="推断约束"><path d="M0 16h12v8H0z" fill={LIGHT} stroke="none" /><path d="M12 23V1h10v8H12" /></Cell></Group>
        <Group><Cell label="动态输入"><path d="M5 3v10M0 8h10" /><path d="M9 14h15v7H9z" fill={LIGHT} stroke="none" /><path d="M12 16v3" stroke="#39424f" /></Cell></Group>
        <Group>
          <Cell label="正交模式" on><path d="M1 0v23h23M1 16h8v7" stroke="#fff" /></Cell>
          <Cell label="极轴追踪"><circle cx="10" cy="12" r="9" /><path d="M10 12h14M10 12L20 1" /></Cell>
          <Drop label="极轴设置" />
          <Cell label="等轴测草图"><path d="M3 3l18 18" stroke="#d66a72" strokeWidth="2" /><path d="M12 0v24" stroke="#5fc27d" strokeWidth="2" /><path d="M10 10h4v4h-4z" /></Cell>
          <Drop label="等轴测设置" />
        </Group>
        <Group>
          <Cell label="对象捕捉追踪"><path d="M18 3L1 20h23" /><path d="M9 9l3 4" stroke={LIGHT} strokeWidth="4" /></Cell>
          <Cell label="对象捕捉" on><path d="M10 3h13v20H2V10" stroke="#fff" /><path d="M1 1h6v6H1z" stroke="#fff" /></Cell>
          <Drop label="对象捕捉设置" />
        </Group>
        <Group><Cell label="线宽"><path d="M0 3h24" strokeWidth="2" /><path d="M0 4h10" strokeWidth="3" /><path d="M0 10h24M0 20h24" strokeWidth="2" /><path d="M0 11h13M0 20h13" strokeWidth="5" /></Cell></Group>
        <Group>
          <Cell label="透明度">
            <path d="M1 1h22v22H1z" />
            <path d="M4 6h16M4 14h16" strokeWidth="4" strokeDasharray="4 4" />
            <path d="M8 10h12M8 18h12" strokeWidth="4" strokeDasharray="4 4" />
          </Cell>
        </Group>
        <Group><Cell label="选择循环"><path d="M4 0v8M0 4h8" /><path d="M20 6H7v15" /><path d="M9 8h15v16H9z" fill="#7fdc9d" stroke="none" /></Cell></Group>
        <Group>
          <Cell label="三维对象捕捉" on><path d="M4 14V7l7-6h12v15l-6 5h-7M4 7h13v14M17 7l6-6" stroke="#fff" /><path d="M1 17h6v6H1z" stroke="#fff" /></Cell>
          <Drop label="三维对象捕捉设置" />
        </Group>
      </div>
      <Group>
        <Cell label="动态 UCS" on><path d="M3 4v17h17" stroke="#fff" /><path d="M3 0l3 5H0zM24 21l-5-3v6zM15 4l-6 8h4l-2 6 7-8h-4z" fill="#fff" stroke="none" /></Cell>
        <Cell label="选择过滤"><path d="M3 6h15v15H3z" strokeDasharray="4 3" /><path d="M5 3l3-3h15v14l-4 5" /><path d="M1 4h4v4H1zM16 4h4v4h-4zM1 19h4v4H1zM16 19h4v4h-4z" fill="#8fccf5" stroke="#8fccf5" strokeWidth="1" /></Cell>
        <Drop label="过滤设置" />
        <Cell label="小控件" on><path d="M12 2l10 6v10l-10 5-10-5V8zM12 2v12M12 14L3 18M12 14l9 4" stroke="#fff" /><path d="M10 1h4v3h-4zM1 16h3v3H1zM20 16h3v3h-3zM12 10l4 4-4 3-4-3z" fill="#5c8dc3" stroke="#fff" /></Cell>
        <Drop label="小控件设置" />
      </Group>
      <Group>
        <Cell label="显示注释对象" on><g transform="translate(-2 2)"><path d={scalePerson} fill="#fff" stroke="none" /></g><circle cx="20" cy="5" r="3.500" stroke="#fff" /></Cell>
        <Cell label="自动缩放"><g transform="translate(-2 2)"><path d={scalePerson} fill={LIGHT} stroke="none" /></g><path d="M21 0l-5 7h3l-2 5 6-7h-3z" fill={LIGHT} stroke="none" /></Cell>
        <Cell label="注释比例"><g transform="translate(0 1)"><path d={scalePerson} fill={LIGHT} stroke="none" /></g></Cell>
        <button className="w-[87px] pl-1 text-center text-[17px] whitespace-nowrap">1:1 / 100%</button>
        <Drop label="比例列表" />
      </Group>
      <div className="flex gap-[2px]">
        <Group>
          <Cell label="切换工作空间">
            <circle cx="12" cy="12" r="6" strokeWidth="5" />
            <circle cx="12" cy="12" r="10" strokeWidth="4" strokeDasharray="4 3.850" />
          </Cell>
          <Drop label="工作空间列表" />
        </Group>
        <Group><Cell label="注释监视器"><path d="M12 0v24M0 12h24" strokeWidth="3" /></Cell></Group>
      </div>
      <div className="flex gap-[2px]">
        <Group>
          <label htmlFor="units" aria-label="图形单位" className="grid w-9 place-items-center">
            <Svg><path d="M5 0h13v3h-5v3h5v2h-5v3h5v2h-5v3h5v2h-5v3h5v3H5z" fill={LIGHT} stroke="none" /></Svg>
          </label>
          <div className="relative flex w-[110px]">
            <select id="units" defaultValue="小数" className="w-full appearance-none bg-transparent pl-[8px] text-lg font-medium outline-none">
              <option>小数</option>
              <option>工程</option>
              <option>建筑</option>
            </select>
            <Caret className="pointer-events-none absolute top-[15px] right-[6px]" />
          </div>
        </Group>
        <Group><Cell label="快捷特性"><path d="M3 1h18v22H3z" /><path d="M3 3h18" strokeWidth="4" /><path d="M6 9h3M6 14h3M6 19h3M11 9h8M11 14h8M11 19h8" strokeWidth="2" /></Cell></Group>
      </div>
      <div className="flex gap-[2px]">
        <Group>
          <Cell label="锁定用户界面"><path d="M10 20H1V2h19v8" /><path d="M0 2h21" strokeWidth="4" /><path d="M10 16h11v8H10z" fill={LIGHT} stroke="none" /><path d="M17 16v-3c0-3 6-3 6 0v2" strokeWidth="2" /></Cell>
          <Drop label="锁定列表" />
        </Group>
        <Group><Cell label="隔离对象"><path d="M1 1h8v9H1z" /><circle cx="19" cy="11" r="4.500" /><path d="M10 16l4 7H6z" /></Cell></Group>
      </div>
      <Group><Cell label="硬件加速" on><circle cx="12" cy="12" r="11" stroke="#a8bdd6" strokeWidth="2" /><path d="M11 13l8-8" stroke="#a8bdd6" strokeWidth="3" /></Cell></Group>
      <span className="h-9 w-[3px] bg-[#39424f]" />
      <Group>
        <Cell label="全屏显示"><path d="M1 3h22v18H1z" /><path d="M14 6h6v6zM4 12v6h6z" fill={LIGHT} stroke="none" /><path d="M18 8l-4 4M6 16l4-4" /></Cell>
        <Cell label="自定义"><path d="M0 2h24M0 12h24M0 22h24" strokeWidth="3" /></Cell>
      </Group>
    </footer>
  );
}

/* ---------- watermark ---------- */

function Watermark() {
  return (
    <svg className="pointer-events-none absolute right-[80px] bottom-[30px] opacity-80" width="292" height="140" viewBox="0 0 292 140" role="img" aria-label="Baidu 经验">
      <g fill="#e6e6e6">
        <ellipse cx="110" cy="36" rx="10.500" ry="14" />
        <ellipse cx="130" cy="16" rx="10" ry="14" />
        <ellipse cx="155" cy="18" rx="10.500" ry="14" />
        <ellipse cx="171" cy="42" rx="10.500" ry="14" />
        <path d="M140 38c12 0 14 12 22 19 9 7 16 14 13 24-3 11-14 11-22 9-8-1-18-1-26 0-9 2-19 1-22-9-2-11 5-17 13-24 8-7 11-19 22-19z" />
        <text x="-2" y="89" fontFamily="Roboto" fontSize="68" fontWeight="900">Bai</text>
        <text x="185" y="84" fontFamily="Noto Sans CJK SC" fontSize="48" fontWeight="900">经验</text>
        <text x="2" y="127" fontFamily="Open Sans" fontSize="33" fontWeight="500">jingyan.baidu.com</text>
      </g>
      <text x="116" y="80" fontFamily="Inter" fontSize="40" fontWeight="600" fill="#222831">du</text>
    </svg>
  );
}

export default function App() {
  return (
    <div className="relative flex min-h-screen min-w-[1600px] flex-col border border-[#14607f] bg-[#222831] font-['Open_Sans','Noto_Sans_CJK_SC',sans-serif] text-[#e8eaed]">
      <header>
        <div className="flex">
          <div className="w-[65px] shrink-0 pt-[11px] pl-[13px]"><Logo /></div>
          <div className="min-w-0 flex-1">
            <TitleBar />
            <MenuTabs />
          </div>
        </div>
        <Ribbon />
      </header>
      <FileTabs />
      <Canvas />
      <LayoutTabs />
      <StatusBar />
      <Watermark />
    </div>
  );
}
